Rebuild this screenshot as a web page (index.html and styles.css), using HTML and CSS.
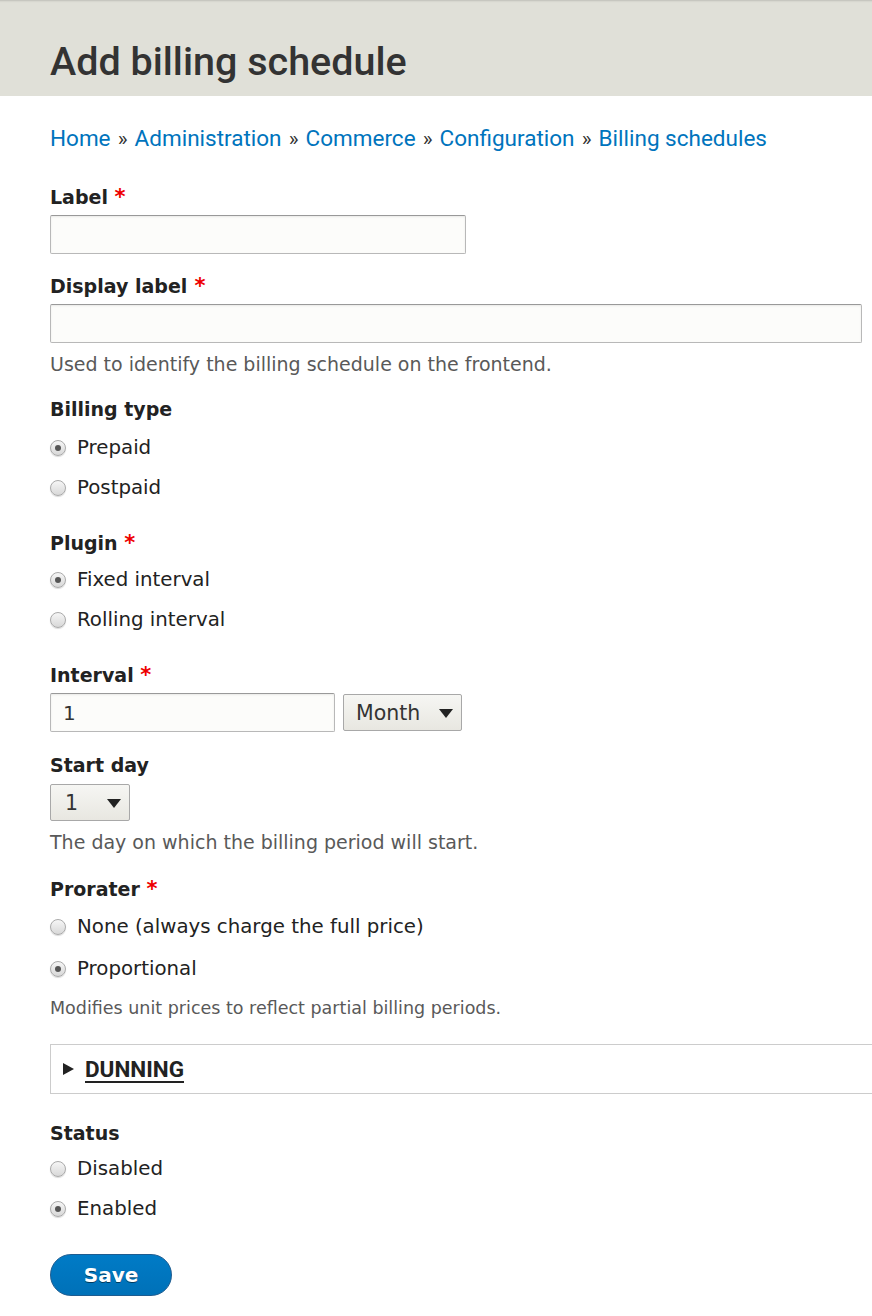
FILE: index.html
```html
<!DOCTYPE html>
<html lang="en">
<head>
<meta charset="utf-8">
<title>Add billing schedule</title>
<link rel="stylesheet" href="styles.css">
</head>
<body>
<header class="page-header">
  <h1 class="page-title">Add billing schedule</h1>
</header>
<main class="content">
  <nav class="breadcrumb">
    <a href="#">Home</a> <span class="sep">»</span> <a href="#">Administration</a> <span class="sep">»</span> <a href="#">Commerce</a> <span class="sep">»</span> <a href="#">Configuration</a> <span class="sep">»</span> <a href="#">Billing schedules</a>
  </nav>

  <form class="form">
    <div class="field field-label">
      <label class="label">Label <span class="req">*</span></label>
      <div class="input input-short"></div>
    </div>

    <div class="field field-display">
      <label class="label">Display label<span class="req"> *</span></label>
      <div class="input input-full"></div>
      <div class="desc">Used to identify the billing schedule on the frontend.</div>
    </div>

    <div class="field field-billing">
      <div class="label">Billing type</div>
      <div class="radios">
        <div class="radio-row"><span class="radio checked"></span><span>Prepaid</span></div>
        <div class="radio-row"><span class="radio"></span><span>Postpaid</span></div>
      </div>
    </div>

    <div class="field field-plugin">
      <div class="label">Plugin <span class="req">*</span></div>
      <div class="radios">
        <div class="radio-row"><span class="radio checked"></span><span>Fixed interval</span></div>
        <div class="radio-row"><span class="radio"></span><span>Rolling interval</span></div>
      </div>
    </div>

    <div class="field field-interval">
      <div class="label">Interval <span class="req">*</span></div>
      <div class="inline">
        <div class="input input-number"><span class="value">1</span></div>
        <div class="select select-month"><span>Month</span><span class="caret"></span></div>
      </div>
    </div>

    <div class="field field-start">
      <div class="label">Start day</div>
      <div class="select select-day"><span>1</span><span class="caret"></span></div>
      <div class="desc">The day on which the billing period will start.</div>
    </div>

    <div class="field field-prorater">
      <div class="label">Prorater <span class="req">*</span></div>
      <div class="radios">
        <div class="radio-row"><span class="radio"></span><span>None (always charge the full price)</span></div>
        <div class="radio-row row-wide"><span class="radio checked"></span><span>Proportional</span></div>
      </div>
      <div class="desc desc-small">Modifies unit prices to reflect partial billing periods.</div>
    </div>

    <div class="details">
      <span class="details-arrow"></span><span class="details-title">DUNNING</span>
    </div>

    <div class="field field-status">
      <div class="label">Status</div>
      <div class="radios">
        <div class="radio-row"><span class="radio"></span><span>Disabled</span></div>
        <div class="radio-row"><span class="radio checked"></span><span>Enabled</span></div>
      </div>
    </div>

    <div class="actions">
      <button type="button" class="button-primary">Save</button>
    </div>
  </form>
</main>
</body>
</html>
```

FILE: styles.css
```css
html, body {
  margin: 0;
  padding: 0;
  background: #fff;
  overflow-x: hidden;
}

body {
  font-family: "DejaVu Sans", "Lucida Grande", Verdana, sans-serif;
  color: #333;
  font-size: 17px;
}

.page-header {
  background: #e0e0d8;
  height: 96px;
  box-sizing: border-box;
  padding: 38px 50px 0;
  box-shadow: inset 0 3px 2px -2px rgba(0, 0, 0, 0.15);
}

.page-title {
  margin: 0;
  font-family: "Roboto", "Open Sans", sans-serif;
  font-weight: 500;
  font-size: 39.5px;
  line-height: 48px;
  color: #333;
}

.content {
  padding: 0 10px 0 50px;
}

.breadcrumb {
  margin-top: 26px;
  font-family: "Roboto", "Open Sans", sans-serif;
  font-size: 22.5px;
  line-height: 32px;
  color: #333;
}

.breadcrumb a {
  color: #0074bd;
  text-decoration: none;
}

.breadcrumb .sep {
  font-size: 21px;
  color: #333;
  margin: 0 1.5px;
}

.form {
  margin-top: 30px;
}

.field {
  display: flex;
  flex-direction: column;
  align-items: flex-start;
}

.label {
  font-weight: bold;
  font-size: 19px;
  line-height: 24px;
  color: #222;
}

.req {
  color: #e00;
  font-size: 21px;
}

.input {
  box-sizing: border-box;
  height: 39px;
  border: 1px solid #b8b8b8;
  border-top-color: #999;
  border-radius: 2px;
  background: #fcfcfa;
  box-shadow: inset 0 1px 2px rgba(0, 0, 0, 0.08);
  display: flex;
  align-items: center;
  padding: 0 12px;
  font-size: 20px;
  color: #333;
}

.input-short {
  width: 416px;
  margin-top: 6px;
}

.input-full {
  align-self: stretch;
  margin-top: 6px;
}

.desc {
  margin-top: 11px;
  font-size: 19px;
  line-height: 20px;
  color: #595959;
}

.desc-small {
  margin-top: 17px;
  font-size: 17.5px;
}

.field-display {
  margin-top: 20px;
}

.field-billing {
  margin-top: 23px;
}

.radios {
  display: flex;
  flex-direction: column;
  gap: 16px;
  margin-top: 15px;
}

.radio-row {
  display: flex;
  align-items: center;
  gap: 11px;
  font-size: 19.8px;
  line-height: 24px;
  color: #222;
}

.row-wide {
  margin-top: 2px;
}

.radio {
  width: 16px;
  height: 16px;
  border-radius: 50%;
  box-sizing: border-box;
  border: 1px solid #aaa;
  background: linear-gradient(#f6f6f6, #d8d8d8);
  box-shadow: 0 1px 1px rgba(0, 0, 0, 0.15);
  position: relative;
  flex: none;
}

.radio.checked::after {
  content: "";
  position: absolute;
  left: 50%;
  top: 50%;
  width: 6px;
  height: 6px;
  margin: -3px 0 0 -3px;
  border-radius: 50%;
  background: #555;
}

.field-plugin {
  margin-top: 31px;
}

.field-plugin .radios {
  margin-top: 13px;
}

.field-interval {
  margin-top: 31px;
}

.inline {
  display: flex;
  align-items: center;
  gap: 8px;
  margin-top: 6px;
}

.input-number {
  width: 285px;
}

.select {
  box-sizing: border-box;
  height: 37px;
  border: 1px solid #a8a8a8;
  border-radius: 2px;
  background: linear-gradient(#f6f6f3, #e8e7e1);
  display: flex;
  align-items: center;
  justify-content: space-between;
  padding: 0 8px 0 12px;
  font-size: 20.5px;
  color: #333;
}

.select-month {
  width: 119px;
}

.select-day {
  width: 80px;
  height: 37px;
  margin-top: 7px;
  padding-left: 14px;
}

.caret {
  width: 0;
  height: 0;
  border-left: 7px solid transparent;
  border-right: 7px solid transparent;
  border-top: 9px solid #222;
  margin-top: 2px;
}

.field-start {
  margin-top: 21px;
}

.field-prorater {
  margin-top: 25px;
}

.field-prorater .radios {
  margin-top: 14px;
}

.details {
  margin-top: 26px;
  margin-right: -40px;
  height: 50px;
  box-sizing: border-box;
  border: 1px solid #ccc;
  display: flex;
  align-items: center;
  padding-left: 12px;
}

.details-arrow {
  width: 0;
  height: 0;
  border-top: 6px solid transparent;
  border-bottom: 6px solid transparent;
  border-left: 11px solid #222;
  margin-right: 11px;
}

.details-title {
  font-family: "Roboto", "Open Sans", sans-serif;
  font-weight: bold;
  font-size: 22.5px;
  color: #222;
  text-decoration: underline;
  text-underline-offset: 4px;
  text-decoration-thickness: 2px;
}

.field-status {
  margin-top: 27px;
}

.field-status .radios {
  margin-top: 12px;
}

.actions {
  margin-top: 33px;
  padding-bottom: 20px;
}

.button-primary {
  width: 122px;
  height: 42px;
  border-radius: 21px;
  border: 1px solid #1e5c90;
  background: linear-gradient(#007bc6, #0071b8);
  color: #fff;
  font-family: "DejaVu Sans", "Lucida Grande", sans-serif;
  font-weight: bold;
  font-size: 20px;
  text-shadow: 0 1px rgba(0, 0, 0, 0.5);
  cursor: pointer;
  padding: 0;
}
```
